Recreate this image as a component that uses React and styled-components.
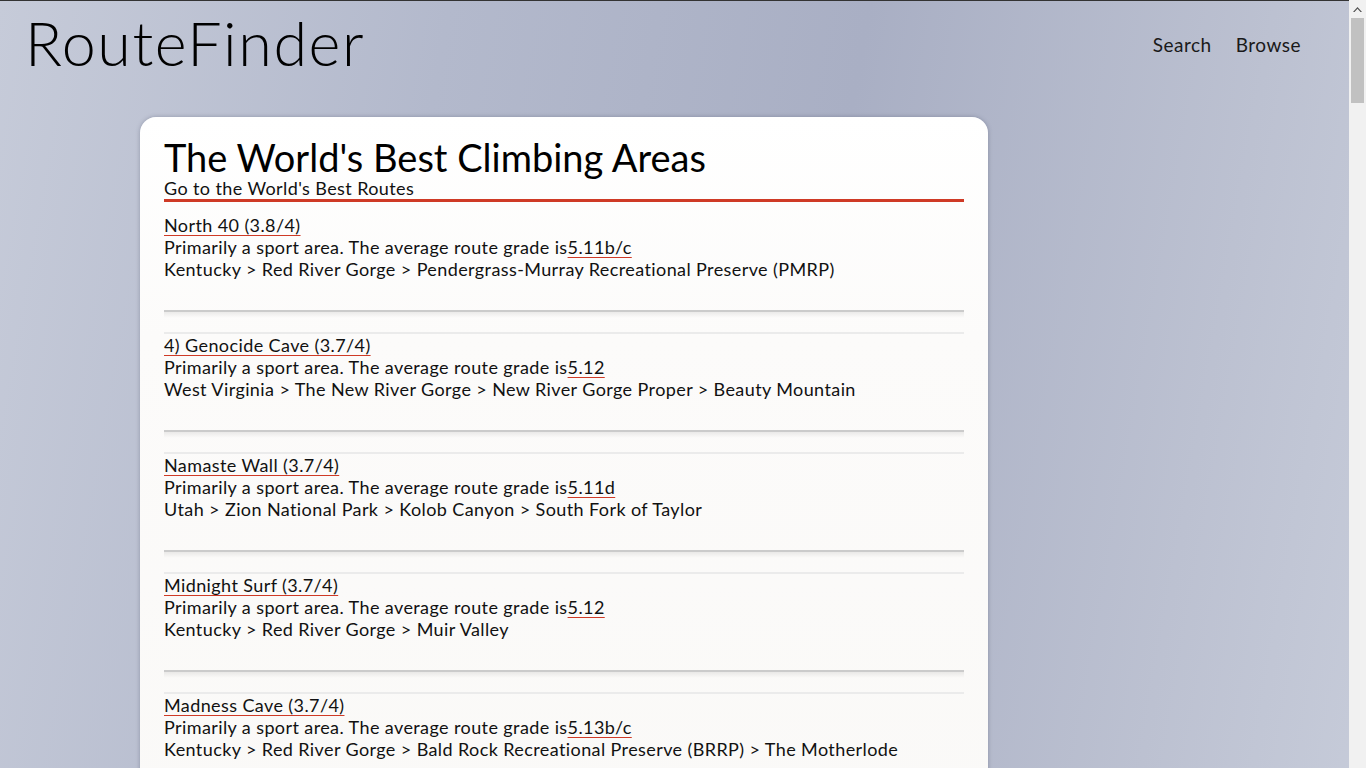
import React from "react";
import styled, { createGlobalStyle } from "styled-components";

const GlobalStyle = createGlobalStyle`
  html, body {
    margin: 0;
    padding: 0;
  }

  body {
    font-family: Lato, "Open Sans", sans-serif;
    color: #111;
    border-top: 1px solid #333;
    min-height: 100vh;
    background: linear-gradient(100deg, #c6cbd9 0%, #b3b9cc 30%, #a9afc4 58%, #bcc1d1 85%, #c6cbd9 100%);
    background-attachment: fixed;
  }
`;

const areas = [
  {
    name: "North 40 (3.8/4)",
    grade: "5.11b/c",
    path: "Kentucky > Red River Gorge > Pendergrass-Murray Recreational Preserve (PMRP)",
  },
  {
    name: "4) Genocide Cave (3.7/4)",
    grade: "5.12",
    path: "West Virginia > The New River Gorge > New River Gorge Proper > Beauty Mountain",
  },
  {
    name: "Namaste Wall (3.7/4)",
    grade: "5.11d",
    path: "Utah > Zion National Park > Kolob Canyon > South Fork of Taylor",
  },
  {
    name: "Midnight Surf (3.7/4)",
    grade: "5.12",
    path: "Kentucky > Red River Gorge > Muir Valley",
  },
  {
    name: "Madness Cave (3.7/4)",
    grade: "5.13b/c",
    path: "Kentucky > Red River Gorge > Bald Rock Recreational Preserve (BRRP) > The Motherlode",
  },
  {
    name: "The Chocolate Factory (3.7/4)",
    grade: "5.11c",
    path: "Kentucky > Red River Gorge > Pendergrass-Murray Recreational Preserve (PMRP)",
  },
  {
    name: "Endless Wall (3.6/4)",
    grade: "5.11a",
    path: "West Virginia > The New River Gorge > New River Gorge Proper",
  },
];

const App = () => {
  return (
    <>
      <GlobalStyle />
      <Header>
        <Logo>RouteFinder</Logo>
        <Nav>
          <NavLink href="#">Search</NavLink>
          <NavLink href="#">Browse</NavLink>
        </Nav>
      </Header>

      <Main>
        <Card>
          <TitleBlock>
            <Title>The World's Best Climbing Areas</Title>
            <SubLink href="#">Go to the World's Best Routes</SubLink>
          </TitleBlock>

          {areas.map((area, i) => (
            <React.Fragment key={area.name}>
              {i > 0 && <Divider />}
              <Item>
                <div>
                  <AreaLink href="#">{area.name}</AreaLink>
                </div>
                <Line>
                  Primarily a sport area. The average route grade is
                  <AreaLink href="#">{area.grade}</AreaLink>
                </Line>
                <Line>{area.path}</Line>
              </Item>
            </React.Fragment>
          ))}
        </Card>
      </Main>

      <ScrollTrack>
        <ScrollArrow>
          <svg width="9" height="6" viewBox="0 0 9 6">
            <path d="M0 6 L4.5 1 L9 6 L7.5 6 L4.5 2.8 L1.5 6 Z" fill="#505050" />
          </svg>
        </ScrollArrow>
        <ScrollThumb />
      </ScrollTrack>
    </>
  );
};

const Header = styled.header`
  display: flex;
  justify-content: space-between;
  align-items: flex-start;
  padding: 0 65px 0 25px;
  height: 116px;
`;

const Logo = styled.h1`
  margin: 6px 0 0 0;
  font-size: 61px;
  font-weight: 300;
  line-height: 72px;
  letter-spacing: 1.6px;
  color: #000;
`;

const Nav = styled.nav`
  display: flex;
  gap: 24px;
  margin-top: 32px;
`;

const NavLink = styled.a`
  font-size: 19px;
  letter-spacing: 0.5px;
  color: #1a1a1a;
  text-decoration: none;
`;

const Main = styled.main`
  padding: 0 0 0 140px;
`;

const Card = styled.section`
  width: 848px;
  box-sizing: border-box;
  padding: 20px 24px 40px;
  border-radius: 16px;
  background: linear-gradient(180deg, #ffffff 0px, #fcfbfa 220px, #f9f8f6 100%);
  box-shadow: 0 0 4px rgba(60, 65, 90, 0.35);
`;

const TitleBlock = styled.div`
  display: flex;
  flex-direction: column;
  align-items: flex-start;
  border-bottom: 3px solid #cf3a26;
  margin-bottom: 12px;
`;

const Title = styled.h2`
  margin: 0;
  font-size: 38px;
  font-weight: 400;
  line-height: 40px;
  color: #000;
`;

const SubLink = styled.a`
  font-size: 18px;
  line-height: 22px;
  letter-spacing: 0.4px;
  color: #111;
  text-decoration: none;
`;

const Item = styled.div`
  font-size: 18px;
  line-height: 22px;
  letter-spacing: 0.4px;
  padding-bottom: 30px;
`;

const Line = styled.div`
  color: #111;
`;

const AreaLink = styled.a`
  color: #111;
  text-decoration: underline;
  text-decoration-color: #cf3a26;
  text-underline-offset: 3px;
  text-decoration-thickness: 1px;
`;

const Divider = styled.hr`
  margin: 0;
  height: 20px;
  border: 0;
  border-top: 2px solid #cbcbcb;
  border-bottom: 2px solid #ebebeb;
  background: linear-gradient(180deg, rgba(0, 0, 0, 0.07) 0px, rgba(0, 0, 0, 0) 6px);
`;

const ScrollTrack = styled.div`
  position: fixed;
  top: 0;
  right: 0;
  bottom: 0;
  width: 17px;
  background: #f1f1f1;
  display: flex;
  flex-direction: column;
  align-items: center;
`;

const ScrollArrow = styled.div`
  height: 17px;
  display: flex;
  align-items: center;
  justify-content: center;
`;

const ScrollThumb = styled.div`
  width: 13px;
  height: 85px;
  margin-top: 1px;
  background: #c1c1c1;
`;

export default App;
